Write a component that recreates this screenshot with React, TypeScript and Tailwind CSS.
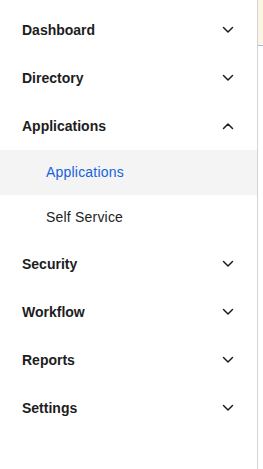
import React from "react";

const Chevron = ({ up }: { up?: boolean }) => (
  <svg width="12" height="8" viewBox="0 0 12 8" fill="none" className="shrink-0">
    <path
      d={up ? "M1.5 6.5 L6 2 L10.5 6.5" : "M1.5 1.5 L6 6 L10.5 1.5"}
      stroke="#1d1d21"
      strokeWidth="1.5"
      strokeLinecap="round"
      strokeLinejoin="round"
    />
  </svg>
);

const Main = ({ label, up }: { label: string; up?: boolean }) => (
  <div className="h-[48px] flex items-center justify-between pl-[22px] pr-[23px]">
    <span className="text-[14px] font-bold text-[#1d1d21]">{label}</span>
    <Chevron up={up} />
  </div>
);

export default function App() {
  return (
    <div
      className="w-[263px] h-[469px] flex bg-white overflow-hidden"
      style={{ fontFamily: '"Liberation Sans", Arial, sans-serif' }}
    >
      <nav className="w-[258px] h-full border-r border-[#d4d4d8] pt-[6px] flex flex-col">
        <Main label="Dashboard" />
        <Main label="Directory" />
        <Main label="Applications" up />
        <div className="h-[45px] flex items-center pl-[46px] bg-[#f4f4f4]">
          <span className="text-[14px] text-[#1662dd] tracking-[0.2px]">Applications</span>
        </div>
        <div className="h-[45px] flex items-center pl-[46px]">
          <span className="text-[14px] text-[#1d1d21] tracking-[0.2px]">Self Service</span>
        </div>
        <Main label="Security" />
        <Main label="Workflow" />
        <Main label="Reports" />
        <Main label="Settings" />
      </nav>
      <div className="flex-1 flex flex-col">
        <div className="h-[45px] bg-[#fbf6e3]" />
        <div className="h-[1px] bg-[#a9b7f2]" />
        <div className="flex-1 bg-white" />
      </div>
    </div>
  );
}
